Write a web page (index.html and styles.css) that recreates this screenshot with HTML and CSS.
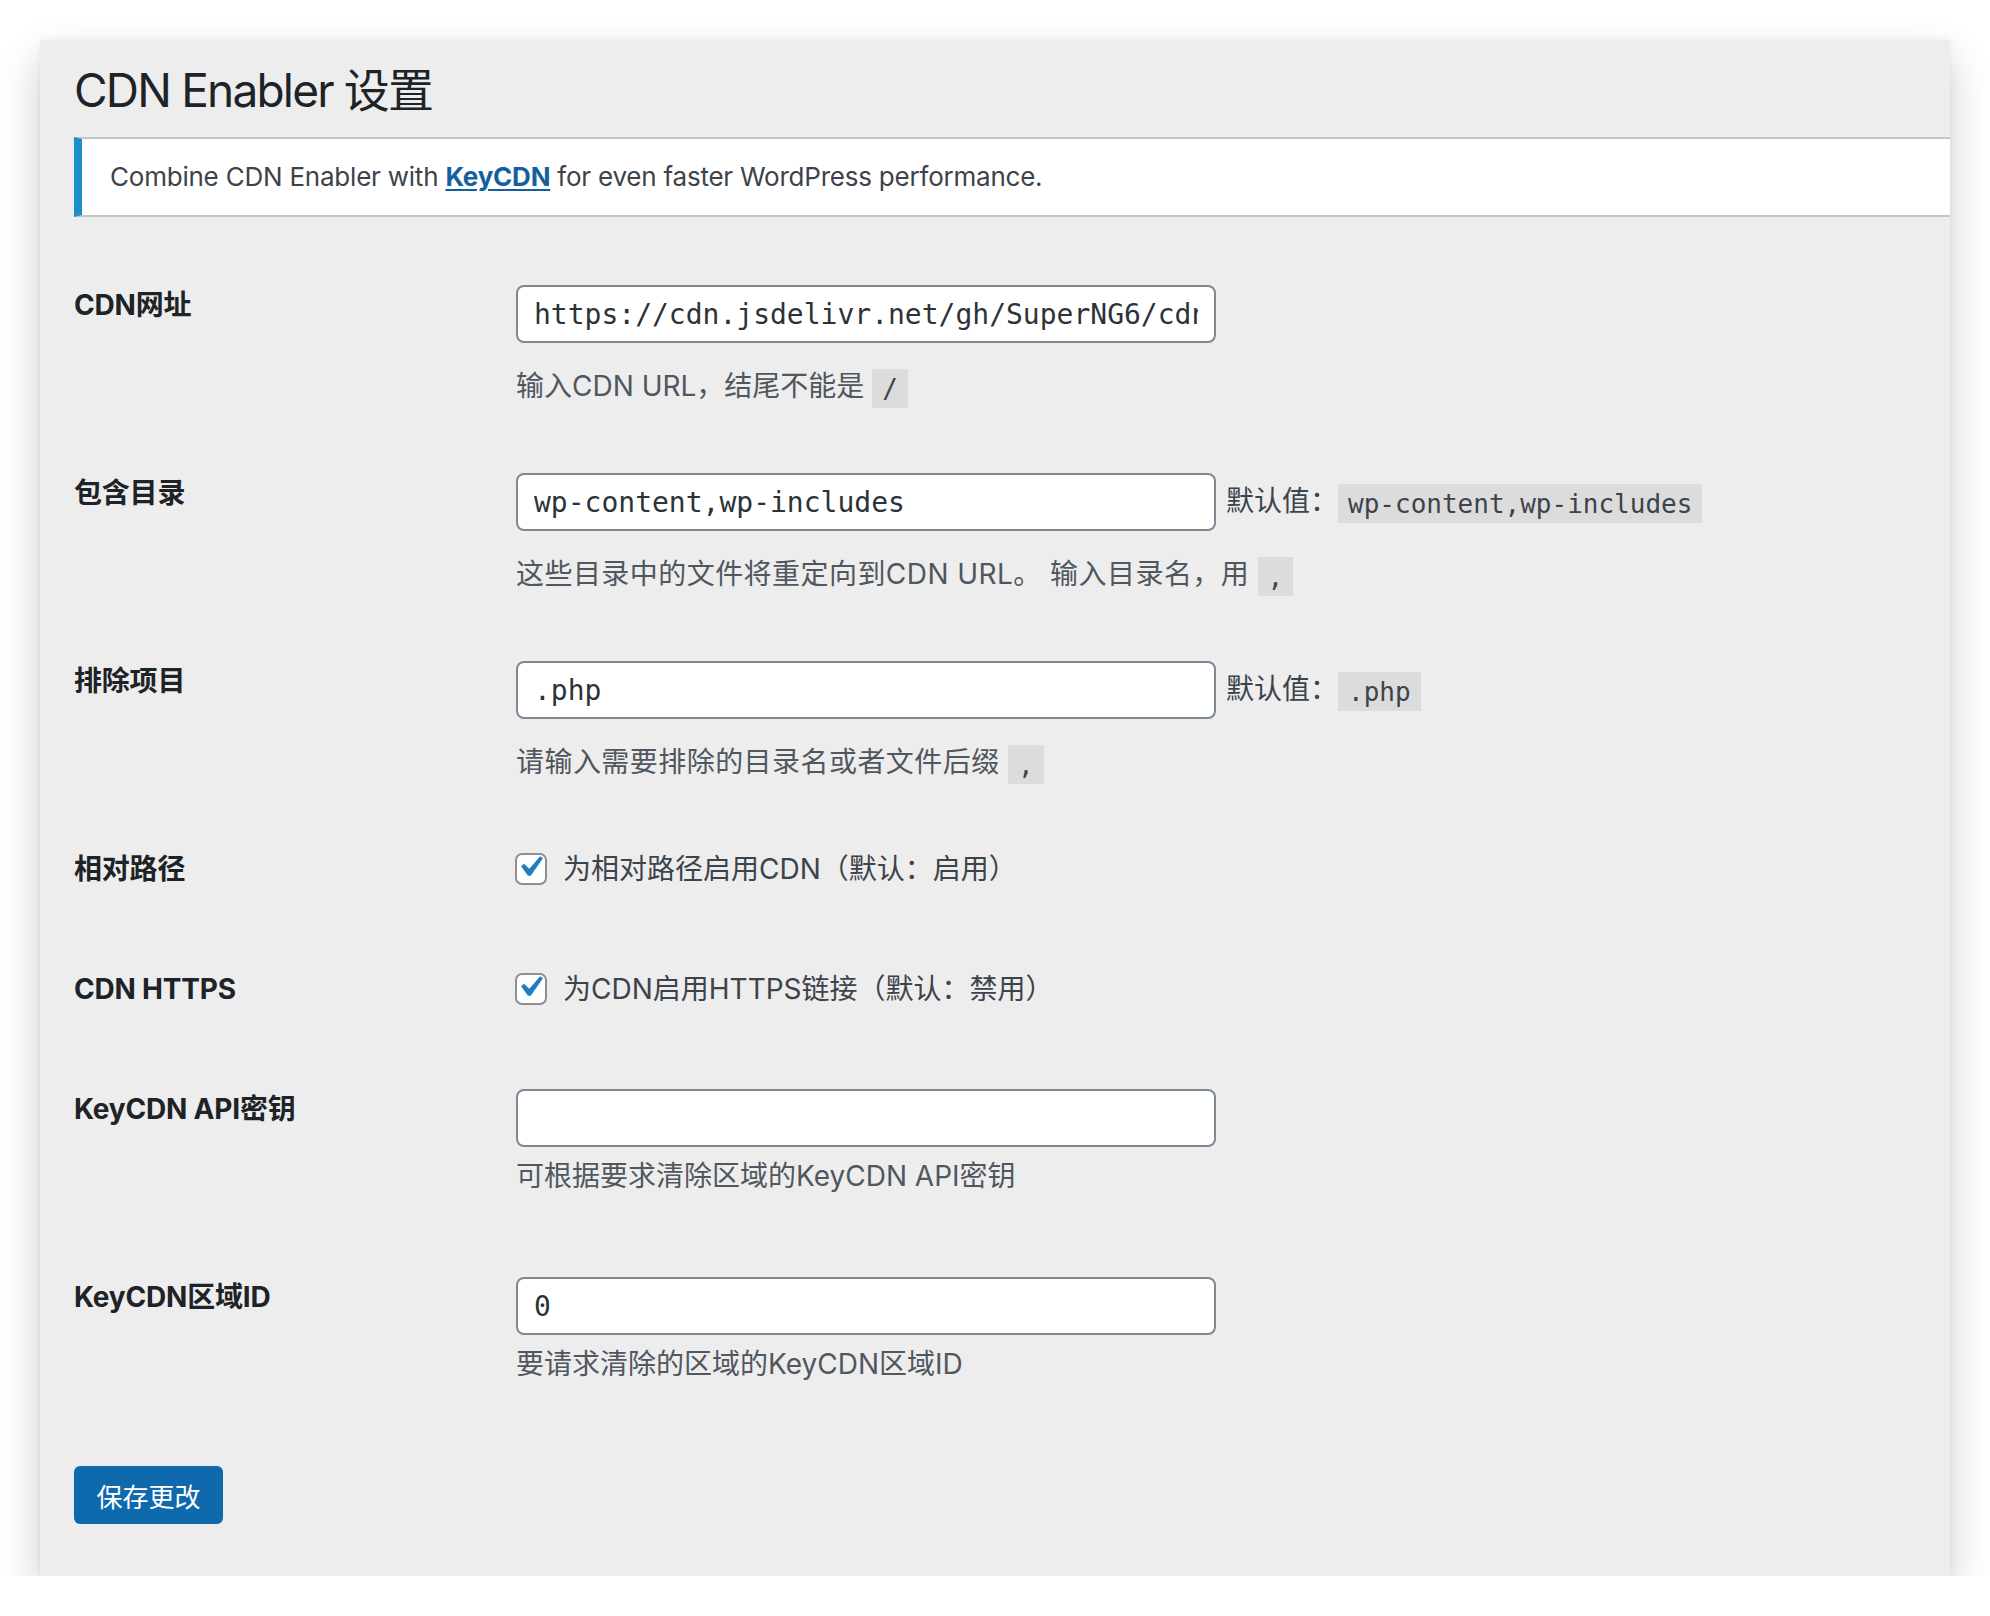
FILE: index.html
```html
<!DOCTYPE html>
<html lang="zh-CN">
<head>
<meta charset="utf-8">
<title>CDN Enabler 设置</title>
<link rel="stylesheet" href="styles.css">
</head>
<body>
<div class="window">
  <div class="wrap">
    <h1 class="title">CDN Enabler 设置</h1>
    <div class="notice">
      <p>Combine CDN Enabler with <a href="#" class="link">KeyCDN</a> for even faster WordPress performance.</p>
    </div>
    <form class="form-table">
      <div class="row row-input">
        <div class="th">CDN网址</div>
        <div class="td">
          <div class="field"><input class="text code-input" type="text" value="https://cdn.jsdelivr.net/gh/SuperNG6/cdn-enabler"></div>
          <p class="desc has-code">输入CDN URL，结尾不能是 <code>/</code></p>
        </div>
      </div>
      <div class="row row-input">
        <div class="th">包含目录</div>
        <div class="td">
          <div class="field"><input class="text code-input" type="text" value="wp-content,wp-includes"><span class="default">默认值：<code>wp-content,wp-includes</code></span></div>
          <p class="desc has-code wide">这些目录中的文件将重定向到CDN URL。 输入目录名，用 <code>,</code></p>
        </div>
      </div>
      <div class="row row-input">
        <div class="th">排除项目</div>
        <div class="td">
          <div class="field"><input class="text code-input" type="text" value=".php"><span class="default">默认值：<code>.php</code></span></div>
          <p class="desc has-code wide">请输入需要排除的目录名或者文件后缀 <code>,</code></p>
        </div>
      </div>
      <div class="row row-check">
        <div class="th">相对路径</div>
        <div class="td">
          <label class="check-label"><span class="checkbox"><svg viewBox="0 0 20 20" width="42" height="42"><path d="M14.83 4.89l1.34.94-5.81 8.38H9.02L5.78 9.67l1.34-1.25 2.57 2.4z" fill="#1f7cc0"/></svg></span>为相对路径启用CDN（默认：启用）</label>
        </div>
      </div>
      <div class="row row-check">
        <div class="th">CDN HTTPS</div>
        <div class="td">
          <label class="check-label"><span class="checkbox"><svg viewBox="0 0 20 20" width="42" height="42"><path d="M14.83 4.89l1.34.94-5.81 8.38H9.02L5.78 9.67l1.34-1.25 2.57 2.4z" fill="#1f7cc0"/></svg></span>为CDN启用HTTPS链接（默认：禁用）</label>
        </div>
      </div>
      <div class="row row-input">
        <div class="th">KeyCDN API密钥</div>
        <div class="td">
          <div class="field"><input class="text code-input" type="text" value=""></div>
          <p class="desc">可根据要求清除区域的KeyCDN API密钥</p>
        </div>
      </div>
      <div class="row row-input">
        <div class="th">KeyCDN区域ID</div>
        <div class="td">
          <div class="field"><input class="text code-input" type="text" value="0"></div>
          <p class="desc">要请求清除的区域的KeyCDN区域ID</p>
        </div>
      </div>
      <div class="submit">
        <button type="button" class="button-primary">保存更改</button>
      </div>
    </form>
  </div>
</div>
</body>
</html>
```
FILE: styles.css
```css
html, body {
  margin: 0;
  padding: 0;
  background: #ffffff;
}

body {
  font-family: Inter, "Noto Sans CJK SC", sans-serif;
  color: #3c434a;
}

.window {
  margin: 40px 0 0 40px;
  width: 1910px;
  height: 1536px;
  background: #ededed;
  box-shadow: 0 18px 40px rgba(0, 0, 0, 0.2), 0 0 6px rgba(0, 0, 0, 0.06);
  overflow: hidden;
}

.wrap {
  padding: 20px 0 0 34px;
}

.title {
  margin: 0;
  font-size: 46px;
  font-weight: 400;
  line-height: 60px;
  color: #1d2327;
  letter-spacing: -1.8px;
}

.notice {
  margin-top: 17px;
  background: #ffffff;
  border-top: 2px solid #c4c5c9;
  border-bottom: 2px solid #c4c5c9;
  border-left: 8px solid #1a8fca;
  padding: 0 28px;
}

.notice p {
  margin: 0;
  font-size: 26px;
  line-height: 76px;
  color: #3c434a;
  letter-spacing: -0.22px;
}

.link {
  color: #14609e;
  font-weight: 700;
  text-decoration: underline;
  text-underline-offset: 3px;
  text-decoration-thickness: 2px;
}

.form-table {
  margin-top: 38px;
}

.row {
  display: grid;
  grid-template-columns: 442px 1fr;
  box-sizing: border-box;
}

.row-input {
  height: 188px;
  padding-top: 30px;
}

.row-check {
  height: 120px;
  padding-top: 30px;
}

.th {
  font-size: 28px;
  font-weight: 700;
  color: #1d2327;
  line-height: 40px;
  padding-top: 0;
  letter-spacing: -0.2px;
}

.field {
  display: flex;
  align-items: center;
  height: 58px;
}

.text {
  box-sizing: border-box;
  width: 700px;
  height: 58px;
  margin: 0;
  padding: 0 16px;
  border: 2px solid #7e8993;
  border-radius: 8px;
  background: #ffffff;
  font-family: "DejaVu Sans Mono", monospace;
  font-size: 28px;
  color: #2c3338;
  outline: none;
}

.default {
  margin-left: 10px;
  font-size: 28px;
  color: #3c434a;
  line-height: 40px;
}

code {
  display: inline-block;
  font-family: "DejaVu Sans Mono", monospace;
  font-size: 26px;
  line-height: 30px;
  padding: 5px 10px 4px;
  background: rgba(0, 0, 0, 0.07);
  color: #3c434a;
  vertical-align: middle;
  letter-spacing: 0;
}

.desc {
  margin: 8px 0 0;
  font-size: 28px;
  line-height: 42px;
  color: #50575e;
}

.desc.has-code {
  margin-top: 22px;
}

.desc.wide {
  letter-spacing: 0.45px;
}

.check-label {
  display: flex;
  align-items: center;
  font-size: 28px;
  line-height: 40px;
  color: #3c434a;
}

.checkbox {
  box-sizing: border-box;
  width: 32px;
  height: 32px;
  margin: 0 16px 0 -1px;
  border: 2px solid #8c8f94;
  border-radius: 7px;
  background: #ffffff;
  display: flex;
  align-items: center;
  justify-content: center;
  overflow: visible;
  flex-shrink: 0;
}

.checkbox svg {
  flex-shrink: 0;
  margin: -4px 0 0 -2px;
}

.submit {
  padding-top: 31px;
}

.button-primary {
  box-sizing: border-box;
  width: 149px;
  height: 58px;
  border: none;
  border-radius: 6px;
  background: #0e69ad;
  color: #ffffff;
  font-family: Inter, "Noto Sans CJK SC", sans-serif;
  font-size: 26px;
  padding: 0;
}
```
